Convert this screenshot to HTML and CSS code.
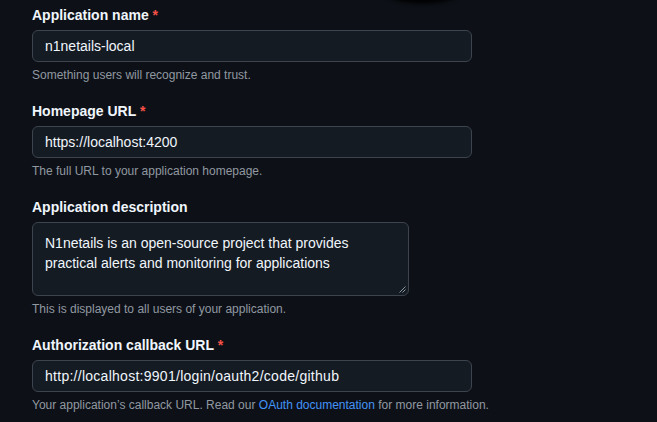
FILE: index.html
```html
<!DOCTYPE html>
<html lang="en">
<head>
<meta charset="utf-8">
<title>Register a new OAuth app</title>
<link rel="stylesheet" href="styles.css">
</head>
<body>
<div class="shadow"></div>
<form class="form">
  <div class="group">
    <label class="label">Application name <span class="req">*</span></label>
    <div class="input">n1netails-local</div>
    <p class="note">Something users will recognize and trust.</p>
  </div>
  <div class="group">
    <label class="label">Homepage URL <span class="req">*</span></label>
    <div class="input">https://localhost:4200</div>
    <p class="note">The full URL to your application homepage.</p>
  </div>
  <div class="group">
    <label class="label">Application description</label>
    <div class="textarea">N1netails is an open-source project that provides practical alerts and monitoring for applications<svg class="grip" width="7" height="7" viewBox="0 0 7 7"><path d="M6.5 0.5 L0.5 6.5 M6.5 3.5 L3.5 6.5" stroke="#8b949e" stroke-width="1"/></svg></div>
    <p class="note">This is displayed to all users of your application.</p>
  </div>
  <div class="group">
    <label class="label">Authorization callback URL <span class="req">*</span></label>
    <div class="input wide">http://localhost:9901/login/oauth2/code/github</div>
    <p class="note">Your application’s callback URL. Read our <a class="link" href="#">OAuth documentation</a> for more information.</p>
  </div>
</form>
</body>
</html>
```
FILE: styles.css
```css
html, body {
  margin: 0;
  padding: 0;
  background: #0d1117;
  height: 100%;
  overflow: hidden;
}
body {
  font-family: "Segoe UI", "Liberation Sans", Arial, sans-serif;
  color: #f0f6fc;
  position: relative;
}
.shadow {
  position: absolute;
  left: 385px;
  top: -20px;
  width: 75px;
  height: 24px;
  border-radius: 50%;
  background: #000;
  filter: blur(2px);
  opacity: 0.9;
}
.form {
  padding: 5px 0 0 32px;
  display: flex;
  flex-direction: column;
  gap: 17px;
}
.group {
  display: flex;
  flex-direction: column;
  align-items: flex-start;
}
.label {
  font-size: 14px;
  font-weight: 700;
  line-height: 20px;
  margin-bottom: 5px;
}
.req {
  color: #f85149;
}
.input, .textarea {
  box-sizing: border-box;
  width: 440px;
  height: 32px;
  padding: 0 12px;
  border: 1px solid #3d444d;
  border-radius: 6px;
  background: #151b23;
  font-size: 14px;
  line-height: 30px;
  color: #f0f6fc;
}
.input.wide {
  letter-spacing: 0.27px;
}
.textarea {
  position: relative;
  width: 377px;
  height: 74px;
  padding: 10px 12px 6px;
  line-height: 20px;
}
.grip {
  position: absolute;
  right: 2px;
  bottom: 2px;
}
.note {
  margin: 4px 0 0;
  font-size: 12px;
  line-height: 18px;
  color: #9198a1;
}
.link {
  color: #4493f8;
  text-decoration: none;
}
```
